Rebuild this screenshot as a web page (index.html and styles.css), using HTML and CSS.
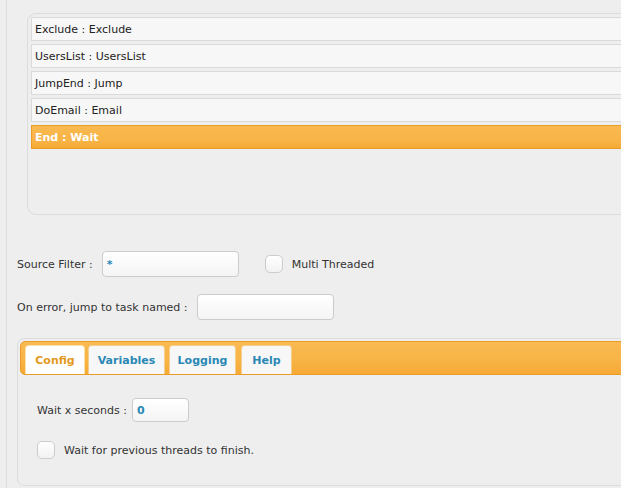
FILE: index.html
```html
<!DOCTYPE html>
<html>
<head>
<meta charset="utf-8">
<link rel="stylesheet" href="styles.css">
</head>
<body>
<div class="page">
  <div class="list-panel">
    <div class="row">Exclude : Exclude</div>
    <div class="row">UsersList : UsersList</div>
    <div class="row">JumpEnd : Jump</div>
    <div class="row">DoEmail : Email</div>
    <div class="row selected">End : Wait</div>
  </div>

  <div class="form-row first">
    <span class="label">Source Filter :</span>
    <div class="input filter">*</div>
    <span class="checkbox multi"></span>
    <span class="label">Multi Threaded</span>
  </div>
  <div class="form-row second">
    <span class="label">On error, jump to task named :</span>
    <div class="input onerror"></div>
  </div>

  <div class="tab-panel">
    <div class="tab-bar">
      <div class="tab active">Config</div>
      <div class="tab">Variables</div>
      <div class="tab">Logging</div>
      <div class="tab">Help</div>
    </div>
    <div class="tab-content">
      <div class="form-row wait">
        <span class="label">Wait x seconds :</span>
        <div class="input seconds">0</div>
      </div>
      <div class="form-row finish">
        <span class="checkbox"></span>
        <span class="label">Wait for previous threads to finish.</span>
      </div>
    </div>
  </div>
</div>
</body>
</html>
```

FILE: styles.css
```css
html, body {
  margin: 0;
  padding: 0;
  background: #eeeeee;
  overflow: hidden;
  width: 621px;
  height: 488px;
}
body {
  font-family: "DejaVu Sans", Verdana, sans-serif;
  font-size: 11px;
  color: #333333;
}
.page {
  margin-left: 6px;
  border-left: 1px solid #dddddd;
  padding: 13px 0 0 10px;
  height: 488px;
  box-sizing: border-box;
  width: 615px;
  overflow: hidden;
}
.list-panel {
  margin-left: 10px;
  width: 620px;
  height: 202px;
  box-sizing: border-box;
  border: 1px solid #dcdcdc;
  border-radius: 9px;
  padding: 3px;
  display: flex;
  flex-direction: column;
  gap: 3px;
}
.row {
  height: 24px;
  box-sizing: border-box;
  border: 1px solid #dadada;
  background: #f7f7f7;
  display: flex;
  align-items: center;
  padding-left: 3px;
  color: #222222;
}
.row.selected {
  background: linear-gradient(#f9b94f, #f8b346 70%, #f6a935);
  border-color: #e99c2a;
  color: #ffffff;
  font-weight: bold;
}
.form-row {
  display: flex;
  align-items: center;
}
.form-row.first {
  margin-top: 36px;
}
.form-row.second {
  margin-top: 17px;
}
.label {
  white-space: nowrap;
}
.input {
  height: 26px;
  box-sizing: border-box;
  border: 1px solid #cccccc;
  border-radius: 4px;
  background: linear-gradient(#ffffff, #f4f4f4);
  color: #2a88b5;
  font-weight: bold;
  display: flex;
  align-items: center;
  padding-left: 4px;
}
.input.filter {
  width: 137px;
  margin-left: 9px;
}
.input.onerror {
  width: 137px;
  margin-left: 9px;
}
.checkbox {
  width: 18px;
  height: 18px;
  box-sizing: border-box;
  border: 1px solid #cccccc;
  border-radius: 5px;
  background: linear-gradient(#ffffff, #f2f2f2);
  flex: none;
}
.checkbox.multi {
  margin-left: 26px;
  margin-right: 9px;
}
.tab-panel {
  margin-top: 18px;
  width: 620px;
  height: 148px;
  box-sizing: border-box;
  border: 1px solid #dcdcdc;
  border-radius: 7px;
  padding: 2px;
}
.tab-bar {
  height: 34px;
  box-sizing: border-box;
  border: 1px solid #e99c2a;
  border-radius: 5px;
  background: linear-gradient(#f9ba52, #f8b446 55%, #f6aa36);
  display: flex;
  align-items: flex-end;
  gap: 3px;
  padding-left: 4px;
}
.tab {
  height: 29px;
  box-sizing: border-box;
  border: 1px solid #f2cf8e;
  border-bottom: none;
  border-radius: 4px 4px 0 0;
  background: #f7f7f7;
  color: #2a88b5;
  font-weight: bold;
  display: flex;
  align-items: center;
  justify-content: center;
}
.tab:nth-child(1) { width: 60px; }
.tab:nth-child(2) { width: 77px; }
.tab:nth-child(3) { width: 67px; margin-left: 1px; }
.tab:nth-child(4) { width: 51px; margin-left: 2px; }
.tab.active {
  background: #ffffff;
  color: #e49a1e;
  border-color: #fbe2a8;
}
.tab-content {
  padding: 23px 0 0 17px;
}
.form-row.wait .input {
  width: 57px;
  height: 24px;
  margin-left: 5px;
}
.form-row.finish {
  margin-top: 19px;
}
.form-row.finish .checkbox {
  margin-right: 9px;
}
```
